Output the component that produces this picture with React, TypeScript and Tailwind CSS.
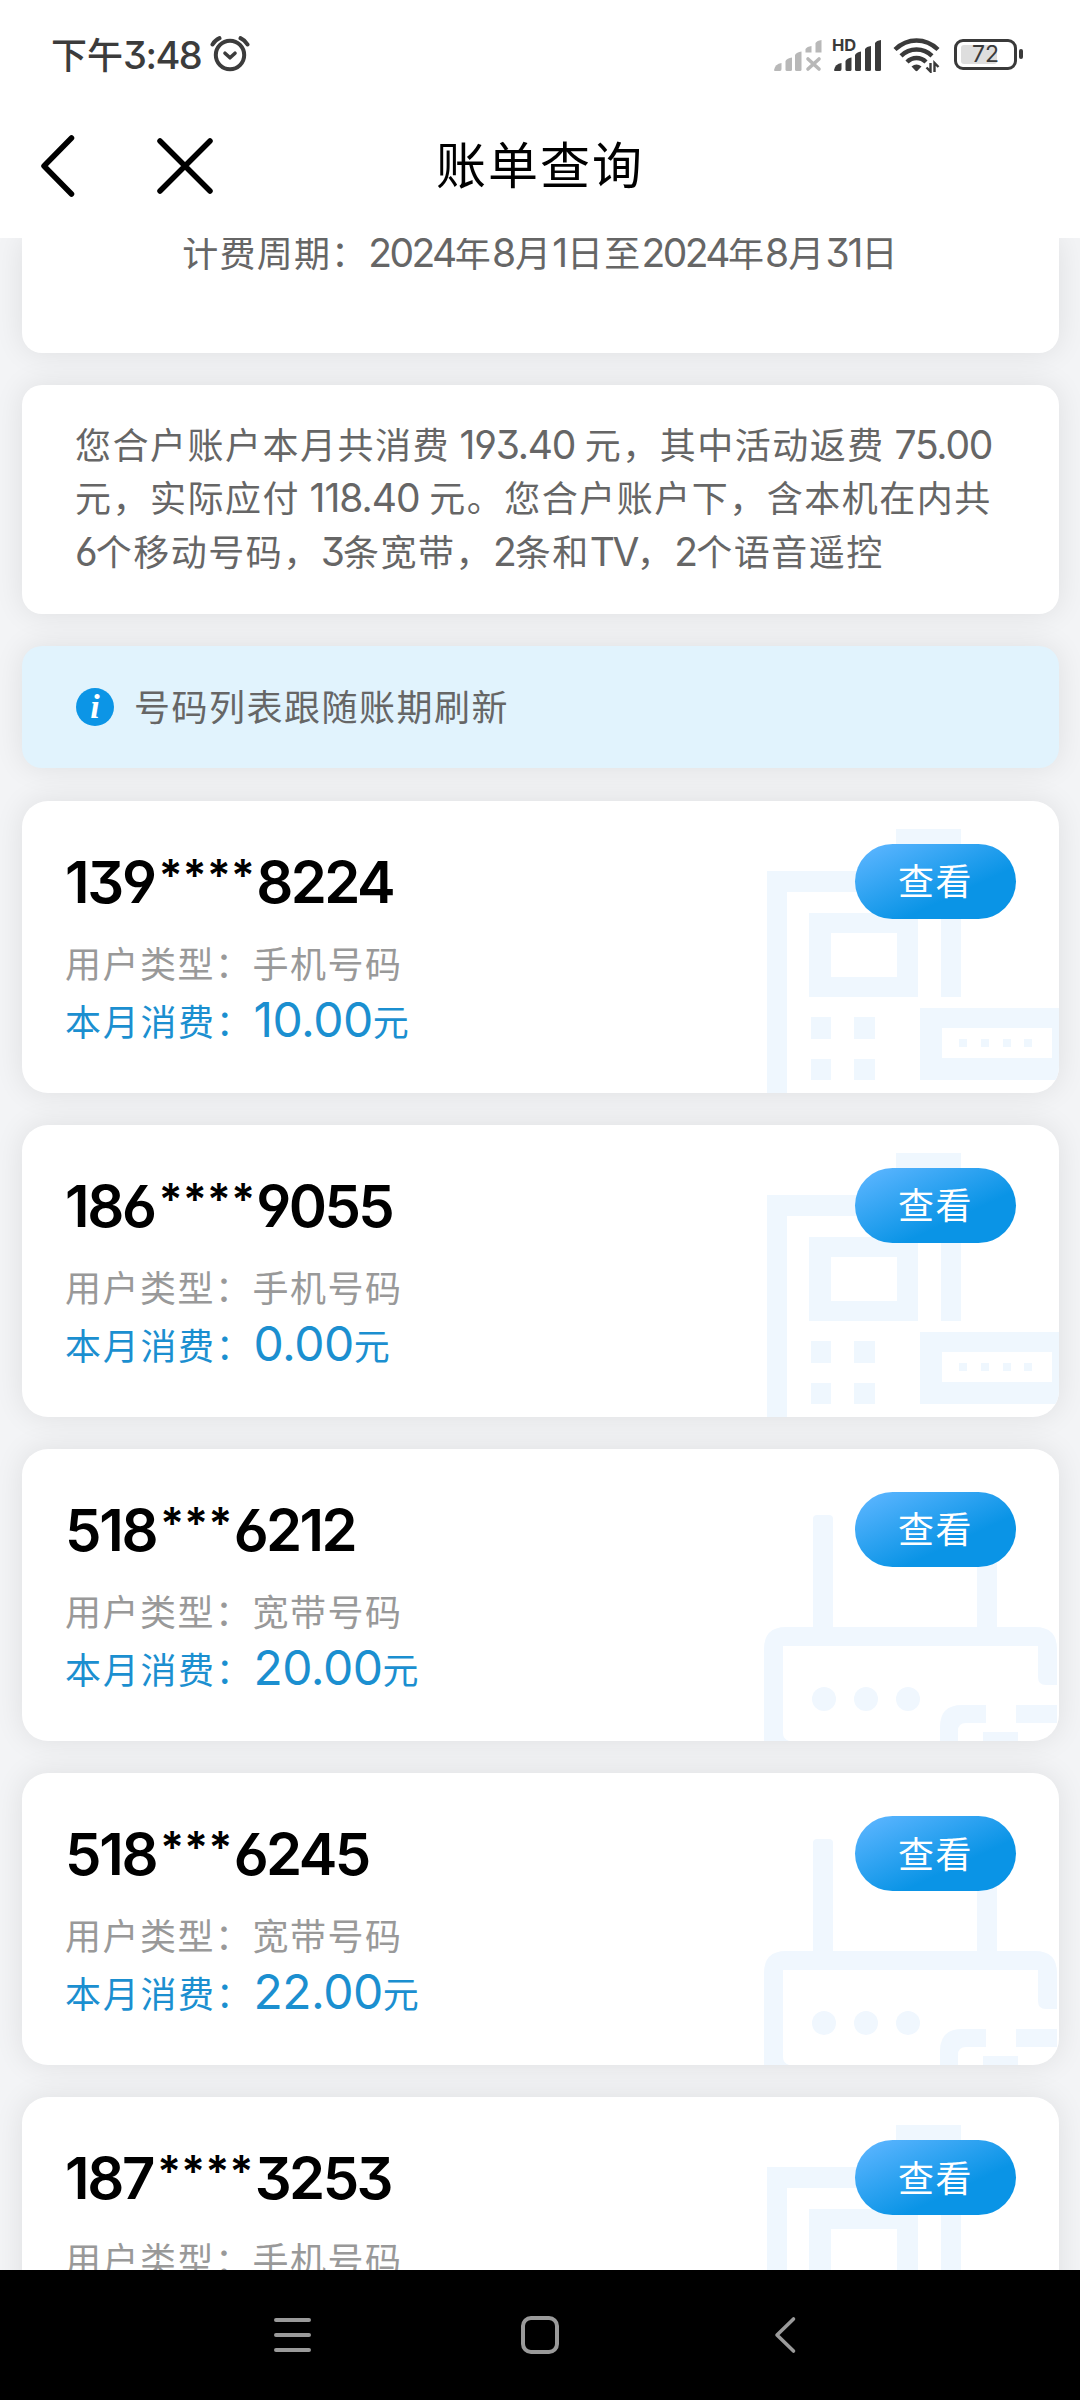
import type { ReactNode } from 'react';

type LineKind = 'mobile' | 'broadband';

interface BillLine {
  prefix: string;
  mask: string;
  suffix: string;
  kind: LineKind;
  amount: string;
}

const lines: BillLine[] = [
  { prefix: '139', mask: '****', suffix: '8224', kind: 'mobile', amount: '10.00' },
  { prefix: '186', mask: '****', suffix: '9055', kind: 'mobile', amount: '0.00' },
  { prefix: '518', mask: '***', suffix: '6212', kind: 'broadband', amount: '20.00' },
  { prefix: '518', mask: '***', suffix: '6245', kind: 'broadband', amount: '22.00' },
  { prefix: '187', mask: '****', suffix: '3253', kind: 'mobile', amount: '6.00' },
];

const kindLabels: Record<LineKind, string> = {
  mobile: '手机号码',
  broadband: '宽带号码',
};

function Num({ children, className = '' }: { children: ReactNode; className?: string }) {
  return (
    <span className={`font-['Inter'] leading-none [font-feature-settings:'cv09','cv03','cv04'] ${className}`}>
      {children}
    </span>
  );
}

function AlarmIcon() {
  return (
    <svg width="40" height="38" viewBox="0 0 40 38" fill="none" stroke="#3c3c3c" strokeLinecap="round" strokeLinejoin="round">
      <circle cx="20" cy="20" r="14.2" strokeWidth="4" />
      <path d="M15 18.2l5 4.6 5-4.6" strokeWidth="3.6" />
      <path d="M2.5 9.5Q5 5.2 9.5 3.2M37.5 9.5Q35 5.2 30.5 3.2" strokeWidth="4" />
    </svg>
  );
}

function WeakSignal() {
  return (
    <svg width="48" height="36" viewBox="0 0 48 36" fill="#b8b8b8">
      <path d="M0 34Q1 28 7.5 27V33Q7.5 35 6 35H1Q0 35 0 34z" />
      <path d="M11.5 25Q13 22 18 21.5V33.5Q18 35 16.5 35H13Q11.5 35 11.5 33.5z" />
      <path d="M21 19Q22.5 16 27.5 15.5V33.5Q27.5 35 26 35H22.5Q21 35 21 33.5z" />
      <path d="M31.5 13Q33 10.5 37.5 10V16.5H31.5z" />
      <path d="M41.5 7Q43 4.5 47.5 4V16.5H41.5z" />
      <path d="M34 23L45 33M45 23L34 33" stroke="#b8b8b8" strokeWidth="3.6" strokeLinecap="round" />
    </svg>
  );
}

function HdSignal() {
  return (
    <div className="relative h-[36px] w-[50px]">
      <span className="absolute left-0 top-[2px] font-['Inter'] text-[16.5px] font-bold leading-[14px] tracking-[-0.2px] text-[#3a3a3a]">HD</span>
      <svg className="absolute left-[2px] top-0" width="48" height="36" viewBox="0 0 48 36" fill="#3a3a3a">
        <path d="M0 34Q1 28 7.5 27V33Q7.5 35 6 35H1Q0 35 0 34z" />
        <path d="M11.5 25Q13 22 17.5 21.5V33.5Q17.5 35 16 35H13Q11.5 35 11.5 33.5z" />
        <path d="M21 19Q22.5 16 27 15.5V33.5Q27 35 25.5 35H22.5Q21 35 21 33.5z" />
        <path d="M31 13Q32.5 10.5 37 10V33.5Q37 35 35.5 35H32.5Q31 35 31 33.5z" />
        <path d="M41 7Q42.5 4.5 47 4V33.5Q47 35 45.5 35H42.5Q41 35 41 33.5z" />
      </svg>
    </div>
  );
}

function WifiIcon() {
  return (
    <svg width="48" height="38" viewBox="0 0 48 38" fill="none" stroke="#3a3a3a" strokeWidth="4.4">
      <path d="M2 14.5Q11.5 5.5 23.5 5.5T45 14.5" />
      <path d="M8 20.8Q14.5 14.5 23.5 14.5T39 20.8" />
      <path d="M14 27Q18 23 23.5 23T33 27" />
      <path d="M18.5 31.5Q23.5 27.5 28.5 31.5L24.5 35.8Q23.5 36.5 22.5 35.8z" fill="#3a3a3a" stroke="none" />
      <path d="M37.5 28v8.5l-4-4M41.5 37v-9l4 4" strokeWidth="2.4" />
    </svg>
  );
}

function Battery() {
  return (
    <div className="flex items-center gap-[2px]">
      <div className="relative flex h-[31px] w-[63px] items-center justify-center rounded-[9px] border-[3px] border-[#3a3a3a]">
        <div className="absolute left-[4px] top-[3px] h-[19px] w-[36px] rounded-[3px] bg-[#dedede]" />
        <span className="relative font-['Inter'] text-[23px] leading-none text-[#3a3a3a]">72</span>
      </div>
      <div className="h-[10px] w-[4px] rounded-full bg-[#3a3a3a]" />
    </div>
  );
}

function PhoneArt() {
  return (
    <svg className="absolute bottom-0 right-0" width="299" height="292" viewBox="0 0 299 292" fill="#eff7fe">
      <path d="M136 28H201V196H181V49H136z" />
      <path d="M7 70H136V91H27V292H7z" />
      <path fillRule="evenodd" d="M49 112H158V196H49zM71 132V176H137V132z" />
      <rect x="51" y="216" width="20" height="22" />
      <rect x="94" y="216" width="21" height="22" />
      <rect x="51" y="258" width="20" height="21" />
      <rect x="94" y="258" width="21" height="21" />
      <path fillRule="evenodd" d="M160 207H299V279H160zM182 227V257H292V227z" />
      <rect x="199" y="238" width="8" height="8" />
      <rect x="221" y="238" width="8" height="8" />
      <rect x="243" y="238" width="8" height="8" />
      <rect x="264" y="238" width="8" height="8" />
    </svg>
  );
}

function RouterArt() {
  return (
    <svg className="absolute bottom-0 right-0" width="299" height="292" viewBox="0 0 299 292" fill="#f0f7fe">
      <rect x="53" y="66" width="20" height="120" rx="4" />
      <rect x="217" y="66" width="20" height="120" rx="4" />
      <path d="M4 292V200Q4 178 26 178H275Q297 178 297 200V236H286Q278 236 278 228V197H23V284Q23 290 29 292z" />
      <circle cx="64" cy="250" r="12" />
      <circle cx="106" cy="250" r="12" />
      <circle cx="148" cy="250" r="12" />
      <path d="M180 292V278Q180 256 202 256H226V274H206Q198 274 198 282V292z" />
      <path d="M256 256H297V274H256z" />
      <path d="M223 283H258V292H223z" />
    </svg>
  );
}

function LineCard({ line }: { line: BillLine }) {
  return (
    <section className="relative h-[292px] shrink-0 overflow-hidden rounded-[26px] bg-white pl-[43px] pt-[49px]">
      {line.kind === 'mobile' ? <PhoneArt /> : <RouterArt />}
      <h2 className="flex h-[64px] items-center text-[58px] font-semibold text-black">
        <Num className="tracking-[-2.3px]">{line.prefix}</Num>
        <Num className="ml-[4px] mr-px pb-[14px] text-[44px] tracking-[0.4px]">{line.mask}</Num>
        <Num className="tracking-[-2.6px]">{line.suffix}</Num>
      </h2>
      <p className="mt-[20px] text-[36px] leading-[56px] tracking-[1.5px] text-[#999]">
        用户类型：{kindLabels[line.kind]}
      </p>
      <p className="text-[36px] leading-[60px] tracking-[1.7px] text-[#1b8fd0]">
        本月消费：<Num className="relative top-px text-[48px] tracking-[-0.5px]">{line.amount}</Num>元
      </p>
      <button className="absolute right-[43px] top-[43px] h-[75px] w-[161px] rounded-full bg-[linear-gradient(155deg,#5bb5ff_5%,#0a94e6_65%)] pb-[4px] text-[36px] tracking-[1.5px] text-white">
        查看
      </button>
    </section>
  );
}

export default function App() {
  return (
    <div className="flex h-[2400px] w-[1080px] flex-col overflow-hidden bg-white font-['Noto_Sans_CJK_SC',sans-serif]">
      {/* Status bar */}
      <div className="flex h-[108px] shrink-0 items-center justify-between pl-[51px] pr-[57px]">
        <div className="flex items-center gap-[9px] text-[36px] font-medium text-[#3c3c3c]">
          <span className="-mt-[3px]">
            下午<Num className="text-[38px] tracking-[-1.5px]">3:48</Num>
          </span>
          <AlarmIcon />
        </div>
        <div className="flex items-center">
          <WeakSignal />
          <div className="ml-[10px]">
            <HdSignal />
          </div>
          <div className="ml-[11px] mr-[13px]">
            <WifiIcon />
          </div>
          <Battery />
        </div>
      </div>

      {/* Title bar */}
      <header className="grid h-[130px] shrink-0 grid-cols-[1fr_auto_1fr] items-center pb-[14px]">
        <div className="flex items-center gap-[81px] pl-[38px]">
          <svg width="38" height="64" viewBox="0 0 38 64" fill="none" stroke="#000" strokeWidth="5.5" strokeLinecap="round" strokeLinejoin="round">
            <path d="M33.5 4L6 32l27.5 28" />
          </svg>
          <svg width="56" height="56" viewBox="0 0 56 56" fill="none" stroke="#000" strokeWidth="5.5" strokeLinecap="round">
            <path d="M3 3l50 50M53 3L3 53" />
          </svg>
        </div>
        <h1 className="-mt-[8px] text-[50px] leading-[60px] tracking-[2px] text-black">账单查询</h1>
      </header>

      {/* Bill content */}
      <main className="flex min-h-0 flex-1 flex-col gap-[32.2px] overflow-hidden bg-[#f3f4f6] pl-[22px] pr-[21px] [&>section]:shadow-[0_0_30px_rgba(0,0,0,0.09)]">
        <section className="h-[115px] shrink-0 rounded-b-[20px] bg-white text-center">
          <p className="-mt-[15px] text-[36px] leading-[56px] tracking-[1.2px] text-[#666]">
            计费周期：<Num className="text-[39px] tracking-[-2.6px]">2024</Num>年<Num className="text-[39px] tracking-[-1px]">8</Num>月
            <Num className="text-[39px] tracking-[-1px]">1</Num>日至<Num className="text-[39px] tracking-[-2.6px]">2024</Num>年
            <Num className="text-[39px] tracking-[-1px]">8</Num>月<Num className="text-[39px] tracking-[-2px]">31</Num>日
          </p>
        </section>

        <section className="h-[229px] shrink-0 rounded-[20px] bg-white pl-[53px] pt-[32px] text-[36px] leading-[53.3px] tracking-[1.5px] text-[#666]">
          <p className="whitespace-nowrap">
            您合户账户本月共消费 <Num className="text-[39px] tracking-[-1.2px]">193.40</Num> 元，其中活动返费 <Num className="text-[39px] tracking-[-1.2px]">75.00</Num>
          </p>
          <p className="whitespace-nowrap">
            元，实际应付 <Num className="text-[39px] tracking-[-1px]">118.40</Num> 元。您合户账户下，含本机在内共
          </p>
          <p className="whitespace-nowrap">
            <Num className="text-[39px] tracking-[-2px]">6</Num>个移动号码，<Num className="text-[39px] tracking-[-2px]">3</Num>条宽带，
            <Num className="text-[39px] tracking-[-2px]">2</Num>条和<Num className="text-[39px] tracking-[-2.5px]">TV</Num>，
            <Num className="text-[39px] tracking-[-2px]">2</Num>个语音遥控
          </p>
        </section>

        <section className="flex h-[122px] shrink-0 items-center gap-[20px] rounded-[20px] bg-[#e1f3fd] pl-[54px]">
          <span className="flex size-[38px] items-center justify-center rounded-full bg-[#0c95e6] font-['Liberation_Serif'] text-[34px] font-bold italic leading-none text-white">i</span>
          <p className="-mt-[4px] text-[36px] leading-[56px] tracking-[1.5px] text-[#666]">号码列表跟随账期刷新</p>
        </section>

        {lines.map((line) => (
          <LineCard key={line.prefix + line.suffix} line={line} />
        ))}
      </main>

      {/* System navigation */}
      <nav className="flex h-[130px] shrink-0 items-center bg-black pl-[272px]">
        <svg width="41" height="38" viewBox="0 0 41 38" stroke="#9a9a9a" strokeWidth="4" strokeLinecap="round">
          <path d="M4 4h33M4 19h33M4 34h33" />
        </svg>
        <div className="ml-[208px] h-[38px] w-[38px] rounded-[10px] border-[4px] border-[#9a9a9a]" />
        <svg className="ml-[214px]" width="26" height="40" viewBox="0 0 26 40" fill="none" stroke="#9a9a9a" strokeWidth="3.6" strokeLinecap="round" strokeLinejoin="round">
          <path d="M20.5 4L4 20l16.5 16" />
        </svg>
      </nav>
    </div>
  );
}
